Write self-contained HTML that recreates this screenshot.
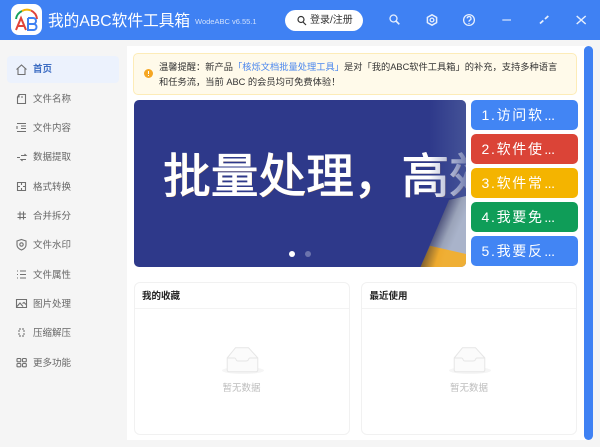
<!DOCTYPE html>
<html lang="zh"><head><meta charset="utf-8"><style>
*{box-sizing:border-box;margin:0;padding:0}
html,body{width:600px;height:447px;overflow:hidden;background:#f5f5f5;font-family:"Liberation Sans","Noto Sans CJK SC",sans-serif}
.a{position:absolute}
.hd{left:0;top:0;width:600px;height:40px;background:#3f81f3}
.logo{left:11px;top:4px;width:31px;height:31px;background:#fff;border-radius:8px}
.nav{left:33px;font-size:9.5px;line-height:14px;color:#666;white-space:nowrap;transform:translateY(.8px)}
.ni{left:15.2px;width:13px;height:13px}
.ni *{fill:none;stroke:#707070;stroke-width:1.1}
.btn{left:471px;width:106.5px;height:30px;border-radius:5px;color:#fff;font-size:14px;line-height:30px;padding-left:10.5px;letter-spacing:1.7px;white-space:nowrap}
.btn span{letter-spacing:-.4px;margin-left:.5px}
.card{width:216px;height:152.500px;top:282px;background:#fff;border:1px solid #f1f1f1;border-radius:6px}
.ct{left:7.500px;top:6.500px;font-size:9.5px;line-height:13px;font-weight:bold;color:#222;white-space:nowrap}
.ln{left:0;top:24.500px;width:100%;height:1px;background:#f3f3f3}
.em{left:87px;top:64px}
.et{left:0;width:100%;top:98.500px;text-align:center;font-size:9.5px;line-height:13px;color:#bdbdbd}
</style></head><body>
<div class="a hd"></div>
<div class="a logo"><svg width="31" height="31" viewBox="0 0 31 31" style="display:block">
<path d="M5 15A10.500 10.500 0 0 1 11 7" fill="none" stroke="#16a05d" stroke-width="2"/>
<path d="M11 7A10.500 10.500 0 0 1 20 6.500" fill="none" stroke="#f4b400" stroke-width="2"/>
<path d="M20 6.500A10.500 10.500 0 0 1 26 15" fill="none" stroke="#e0443a" stroke-width="2"/>
<path d="M5 26L10 14L15 26M7 22H13" fill="none" stroke="#e0443a" stroke-width="2"/>
<path d="M17 14V26H22.500A3 3 0 0 0 22.500 20H17M17 14H22A3 3 0 0 1 22 20" fill="none" stroke="#3f81f3" stroke-width="2"/>
</svg></div>
<div class="a" style="left:48px;top:10px;font-size:15.700px;line-height:23px;color:#fff;white-space:nowrap">我的ABC软件工具箱</div>
<div class="a" style="left:195px;top:15.500px;font-size:7.500px;line-height:12px;color:#cfe0fd;white-space:nowrap">WodeABC v6.55.1</div>
<div class="a" style="left:285px;top:10px;width:78px;height:21px;border-radius:11px;background:#fff"></div>
<svg class="a" style="left:296px;top:15px" width="11" height="11" viewBox="0 0 11 11"><circle cx="5" cy="4.500" r="3" fill="none" stroke="#333" stroke-width="1.200"/><path d="M7 7L10 10" stroke="#333" stroke-width="1.200"/></svg>
<div class="a" style="left:310px;top:13.500px;font-size:10px;line-height:14px;color:#333;white-space:nowrap">登录/注册</div>
<svg class="a" style="left:385px;top:10px" width="210" height="21" viewBox="0 0 210 21" fill="none" stroke="#e6effe" stroke-width="1.300">
<circle cx="8.500" cy="8.500" r="3.500"/><path d="M11 11L14.300 14.300" stroke-width="1.600"/>
<path d="M47 4.800L51.600 7.400V12.600L47 15.200L42.400 12.600V7.400Z" stroke-linejoin="round" stroke-width="1.500"/><circle cx="47" cy="10" r="1.900"/>
<circle cx="84" cy="10" r="5.400"/><path d="M82.200 8.400A1.900 1.900 0 1 1 84.800 10.200Q84 10.700 84 11.800"/><path d="M84 13V13.900"/>
<path d="M117.300 10H126" stroke="#bcd3fb" stroke-width="1.500"/>
<path d="M155 13.500L158.300 10.500M160 9L163.300 6" stroke-width="1.800"/>
<path d="M191.700 6L200.700 14M200.700 6L191.700 14" stroke-width="1.500"/>
</svg>

<div class="a" style="left:7px;top:56px;width:112px;height:27px;border-radius:4px;background:#ecf2fd"></div>
<svg class="a ni" style="top:63px" viewBox="0 0 13 13"><path d="M1.500 6.500L6.500 2L11.500 6.500M3 5.500V11.500H10V5.500" fill="none" stroke="#3f81f3" stroke-width="1.100"/></svg>
<div class="a nav" style="top:62px;color:#3f6fc4;font-weight:bold">首页</div>
<svg class="a ni" style="top:92px" viewBox="0 0 13 13"><path d="M4 2.500H10.500V11.500H2.500V5Z M4 2.500V5H2.500 M6 5H8"/></svg><div class="a nav" style="top:91.500px">文件名称</div>
<svg class="a ni" style="top:121px" viewBox="0 0 13 13"><path d="M2 2.500H11M6 5H11M6 7.500H11M2 10.500H11M2 5V8"/></svg><div class="a nav" style="top:121px">文件内容</div>
<svg class="a ni" style="top:151px" viewBox="0 0 13 13"><path d="M6 4.500H11L9.500 3M11 8.500H6L7.500 10M2 6.500H5"/></svg><div class="a nav" style="top:150px">数据提取</div>
<svg class="a ni" style="top:180px" viewBox="0 0 13 13"><path d="M2.500 2.500H10.500V10.500H2.500ZM6.500 2.500V5M6.500 8V10.500M2.500 6.500H5M8 6.500H10.500"/></svg><div class="a nav" style="top:179.500px">格式转换</div>
<svg class="a ni" style="top:209px" viewBox="0 0 13 13"><path d="M5 2.500V10.500M8.500 2.500V10.500M2.500 5H11M2.500 8.500H11"/></svg><div class="a nav" style="top:208.500px">合并拆分</div>
<svg class="a ni" style="top:238px" viewBox="0 0 13 13"><path d="M6.500 1.500L11 3V7C11 9.500 9 11 6.500 12C4 11 2 9.500 2 7V3Z"/><circle cx="6.500" cy="6.500" r="1.700"/></svg><div class="a nav" style="top:238px">文件水印</div>
<svg class="a ni" style="top:268px" viewBox="0 0 13 13"><path d="M2 3H3M5 3H11M2 6.500H3M5 6.500H11M2 10H3M5 10H11"/></svg><div class="a nav" style="top:267.500px">文件属性</div>
<svg class="a ni" style="top:297px" viewBox="0 0 13 13"><path d="M1.500 2.500H11.500V10.500H1.500ZM2 9.500L5 6L8 9.500M7.500 6.500L9 5.500L11 7.500"/></svg><div class="a nav" style="top:296.500px">图片处理</div>
<svg class="a ni" style="top:326px" viewBox="0 0 13 13"><path d="M5 2V5H2M8 2V5H11M5 11V8H2M8 11V8H11" stroke-dasharray="2 1"/></svg><div class="a nav" style="top:326px">压缩解压</div>
<svg class="a ni" style="top:356px" viewBox="0 0 13 13"><rect x="2" y="2.500" width="3.800" height="3.300" rx=".8"/><rect x="7.500" y="2.500" width="3.800" height="3.300" rx=".8"/><rect x="2" y="7.500" width="3.800" height="3.300" rx=".8"/><rect x="7.500" y="7.500" width="3.800" height="3.300" rx=".8"/></svg><div class="a nav" style="top:355.500px">更多功能</div>

<div class="a" style="left:127px;top:46px;width:463px;height:394px;background:#fff"></div>
<div class="a" style="left:584.300px;top:46px;width:9px;height:393.500px;border-radius:5px;background:#3f81f3"></div>
<div class="a" style="left:133px;top:53px;width:444px;height:42px;background:#fffaea;border:1px solid #fdecb8;border-radius:5px"></div>
<div class="a" style="left:144px;top:69px;width:9px;height:9px;border-radius:50%;background:#f5a623"></div>
<div class="a" style="left:148px;top:71px;width:1px;height:3px;background:#fff"></div>
<div class="a" style="left:148px;top:75px;width:1px;height:1px;background:#fff"></div>
<div class="a" style="left:159px;top:59.500px;font-size:9.250px;line-height:14px;color:#333;white-space:nowrap">温馨提醒：新产品<span style="color:#4a86ee">「核烁文档批量处理工具」</span>是对「我的ABC软件工具箱」的补充，支持多种语言</div>
<div class="a" style="left:159px;top:74.500px;font-size:9.250px;line-height:14px;color:#333;white-space:nowrap">和任务流，当前 ABC 的会员均可免费体验！</div>

<div class="a" style="left:133.500px;top:100px;width:332px;height:166.500px;border-radius:5px;overflow:hidden;background:#2e398a">
<div class="a" style="left:29.500px;top:48px;font-size:47.700px;line-height:60px;color:#fff;font-weight:normal;white-space:nowrap;-webkit-text-stroke:.9px #fff;text-shadow:.7px .7px 0 #eda94a">批量处理，高效</div>
<div class="a" style="left:295px;top:0;width:37px;height:98px;background:linear-gradient(90deg,rgba(75,90,155,0),rgba(75,90,155,.75))"></div>
<svg class="a" style="left:0;top:0" width="332" height="167" viewBox="0 0 332 167">
<defs><linearGradient id="g" gradientUnits="userSpaceOnUse" x1="300" y1="130" x2="321" y2="139"><stop offset="0" stop-color="#454a75"/><stop offset=".6" stop-color="#9aa3b9"/><stop offset="1" stop-color="#a9b3ca"/></linearGradient>
<linearGradient id="o" gradientUnits="userSpaceOnUse" x1="286" y1="160" x2="308" y2="167"><stop offset="0" stop-color="#6a5230"/><stop offset=".7" stop-color="#eeaa2e"/><stop offset="1" stop-color="#efaf35"/></linearGradient></defs>
<path d="M315 100L332 96V167H286.500Z" fill="url(#g)"/>
<path d="M296 145.700L332 154V167H286.500Z" fill="url(#o)"/>
</svg>
<div class="a" style="left:155px;top:151px;width:6px;height:6px;border-radius:50%;background:#fff"></div>
<div class="a" style="left:171px;top:151px;width:6px;height:6px;border-radius:50%;background:#6c74ad"></div>
</div>

<div class="a btn" style="top:100px;background:#4285f4">1.访问软<span>...</span></div>
<div class="a btn" style="top:134px;background:#db4437">2.软件使<span>...</span></div>
<div class="a btn" style="top:168px;background:#f4b400">3.软件常<span>...</span></div>
<div class="a btn" style="top:202px;background:#0f9d58">4.我要免<span>...</span></div>
<div class="a btn" style="top:236px;background:#4285f4">5.我要反<span>...</span></div>

<div class="a card" style="left:133.500px"><div class="a ct">我的收藏</div><div class="a ln"></div>
<svg class="a em" width="42" height="28" viewBox="0 0 42 28"><ellipse cx="21" cy="23.500" rx="21" ry="3.500" fill="#f5f5f5"/><path d="M5.200 11L13.500 .7H26.500L35.800 11V22.700Q35.800 24.700 33.800 24.700H7.200Q5.200 24.700 5.200 22.700Z" fill="#fbfbfb" stroke="#e6e6e6"/><path d="M5.200 11H12.500Q13.500 11 14 12.500T16 14H24Q26 14 26.500 12.500T28 11H35.800" fill="none" stroke="#e6e6e6"/></svg>
<div class="a et">暂无数据</div></div>
<div class="a card" style="left:361px"><div class="a ct">最近使用</div><div class="a ln"></div>
<svg class="a em" width="42" height="28" viewBox="0 0 42 28"><ellipse cx="21" cy="23.500" rx="21" ry="3.500" fill="#f5f5f5"/><path d="M5.200 11L13.500 .7H26.500L35.800 11V22.700Q35.800 24.700 33.800 24.700H7.200Q5.200 24.700 5.200 22.700Z" fill="#fbfbfb" stroke="#e6e6e6"/><path d="M5.200 11H12.500Q13.500 11 14 12.500T16 14H24Q26 14 26.500 12.500T28 11H35.800" fill="none" stroke="#e6e6e6"/></svg>
<div class="a et">暂无数据</div></div>
</body></html>
